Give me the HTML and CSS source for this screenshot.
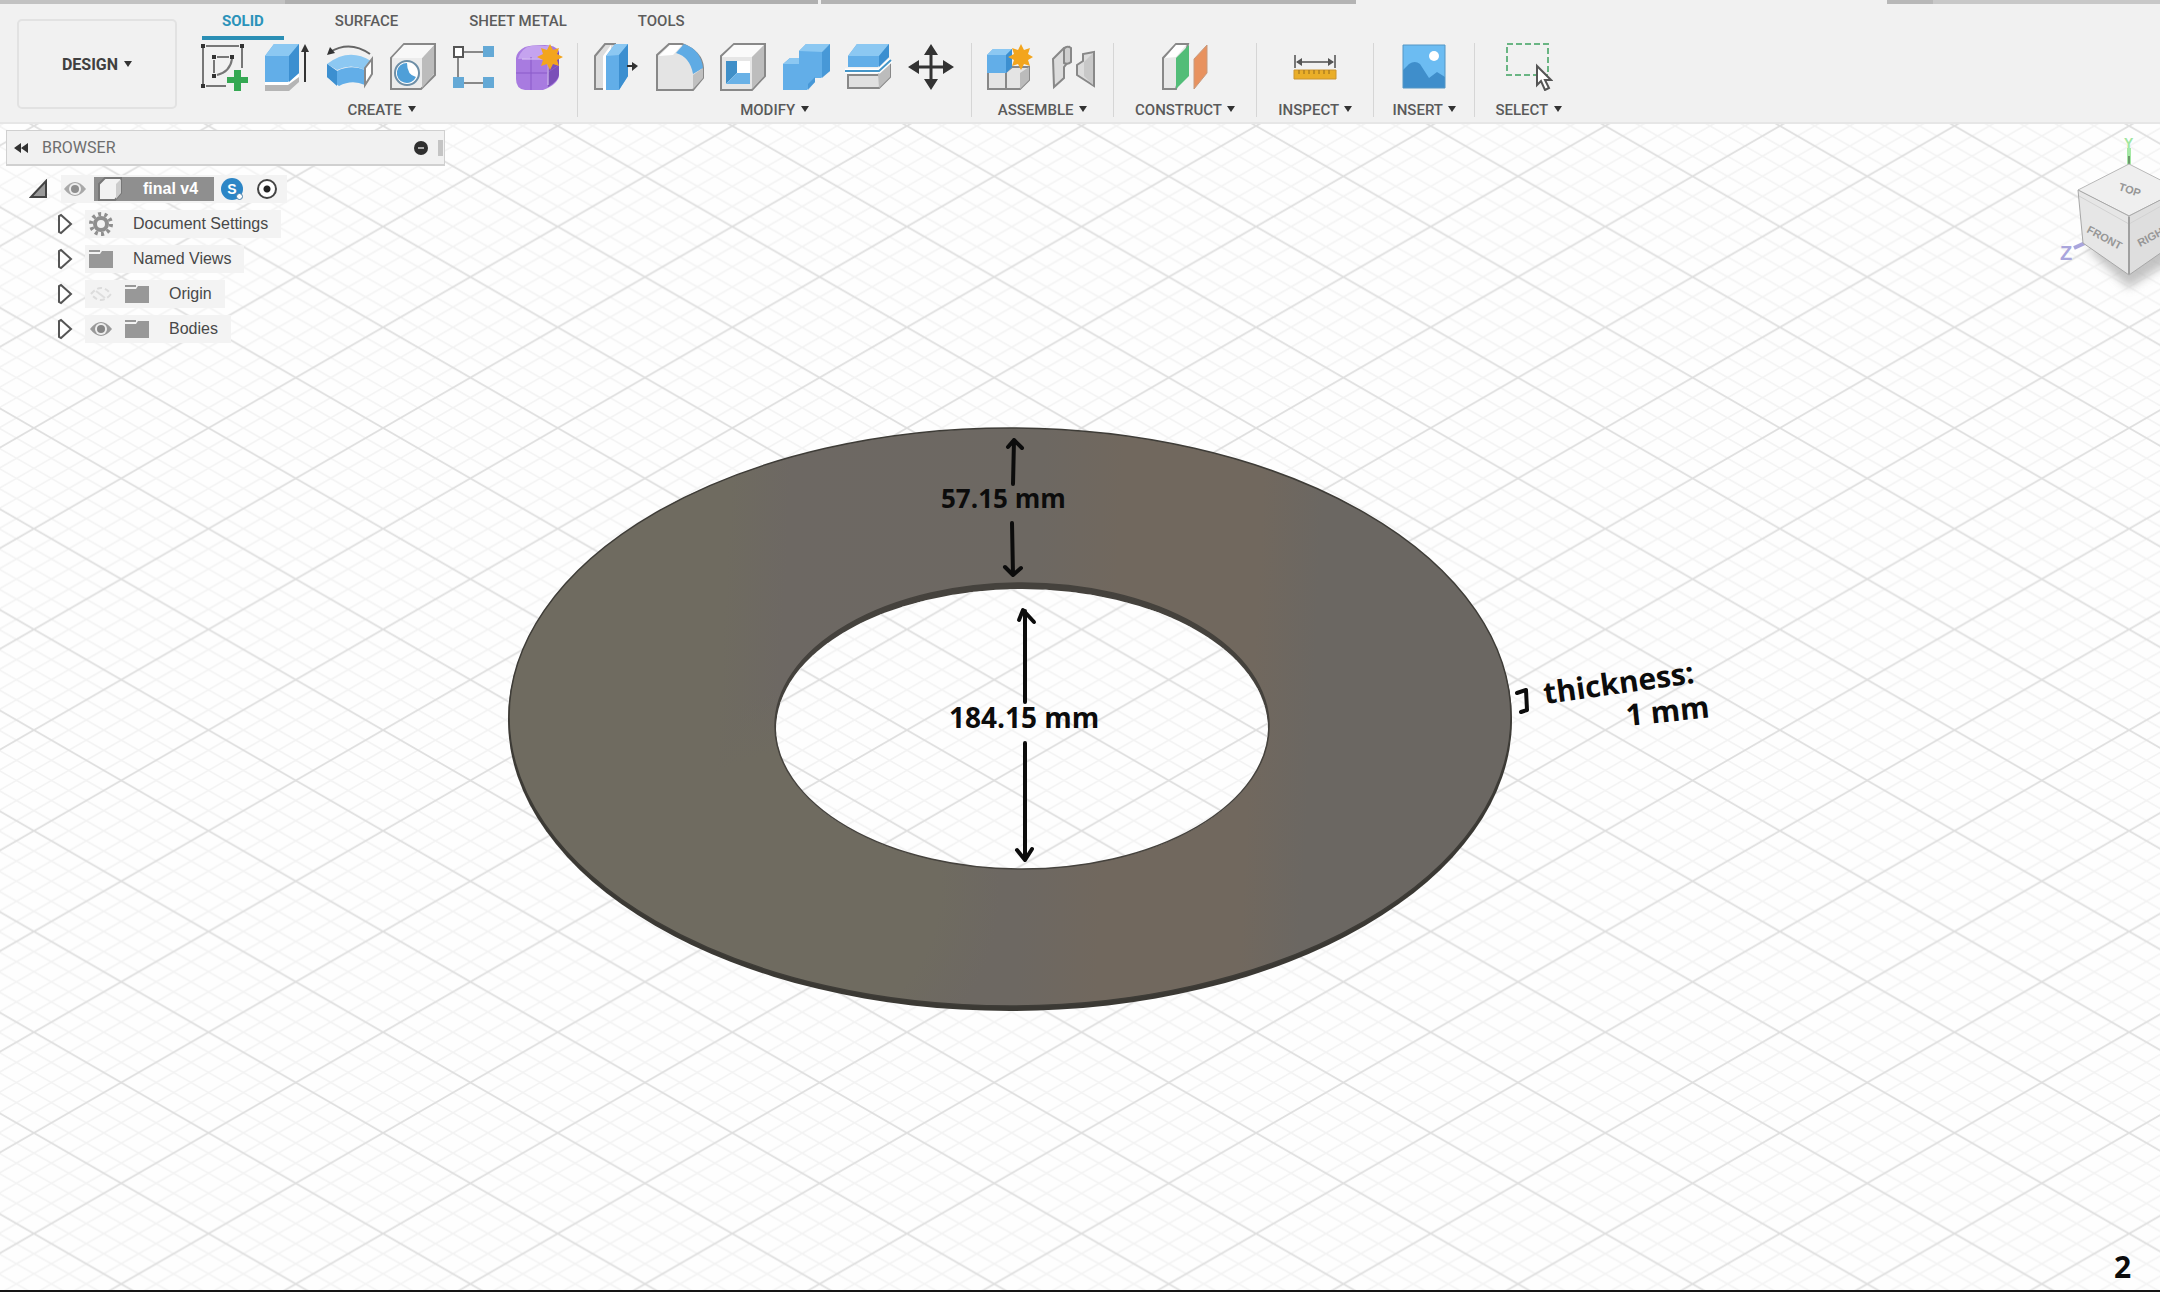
FILE: index.html
```html
<!DOCTYPE html>
<html lang="en">
<head>
<meta charset="utf-8">
<meta name="viewport" content="width=device-width, initial-scale=1">
<title>final v4</title>
<link rel="stylesheet" href="styles.css">
</head>
<body>
<header class="topbar">
  <div class="doc-tabs" aria-hidden="true">
    <span class="doc-tab doc-tab-a"></span><span class="doc-tab doc-tab-b"></span><span class="doc-tab doc-tab-c"></span><span class="doc-gap"></span><span class="doc-tab doc-tab-d"></span><span class="doc-tab doc-tab-e"></span>
  </div>
  <div class="toolbar">
    <button class="workspace" type="button">DESIGN <span class="caret"></span></button>
    <div class="ribbon">
      <nav class="tabs">
        <a class="tab tab-active" href="#solid">SOLID</a>
        <a class="tab" href="#surface">SURFACE</a>
        <a class="tab" href="#sheet">SHEET METAL</a>
        <a class="tab" href="#tools">TOOLS</a>
      </nav>
      <div class="groups">
        <section class="group group-first">
          <div class="icons">
            <button class="tool" type="button" aria-label="Create sketch"><svg viewBox="0 0 48 48"><g fill="none" stroke="#777" stroke-width="2"><path d="M3 5v36M42 5v20M6 3h33M6 43h20"/><path d="M14 17v13M17 14h12M32 16q-2 13-15 16"/></g><g fill="#333"><path d="M1 1h4v4H1zM40 1h4v4h-4zM1 41h4v4H1zM12 12h4v4h-4zM30 12h4v4h-4zM12 31h4v4h-4z"/></g><path d="M34 27h7v7h7v6h-7v8h-7v-8h-7v-6h7z" fill="#35a853"/></svg></button>
            <button class="tool" type="button" aria-label="Extrude"><svg viewBox="0 0 48 48"><path d="M2 41h22l12-8v6l-10 9H2z" fill="#b5b5b5"/><path d="M2 39h22l12-9v4l-11 8H2z" fill="#fff"/><path d="M2 13L11 1h25v29l-11 9H2z" fill="#62aee8"/><path d="M2 13L11 1h25L26 13z" fill="#8cc8f2"/><path d="M26 13L36 1v29l-10 9z" fill="#3c8fd0"/><path d="M42 39V7" stroke="#333" stroke-width="2"/><path d="M42 1l4 8h-8z" fill="#333"/></svg></button>
            <button class="tool" type="button" aria-label="Revolve"><svg viewBox="0 0 48 48"><path d="M4 9q20-12 40 2" fill="none" stroke="#666" stroke-width="2"/><path d="M1 12l3-8 5 6z" fill="#333"/><path d="M1 21q22-17 44-3l-6 9q-14-7-28 0z" fill="#8cc8f2"/><path d="M1 21l10 7q14-7 28-1v15q-13-6-26 1L1 34z" fill="#62aee8"/><path d="M1 21l10 7v15L1 34z" fill="#3c8fd0"/><path d="M46 16v15l-7 11V25z" fill="#fff" stroke="#888" stroke-width="2"/></svg></button>
            <button class="tool" type="button" aria-label="Hole"><svg viewBox="0 0 48 48"><path d="M2 15L15 1h31v31L32 46H2z" fill="#ececec" stroke="#888" stroke-width="2"/><path d="M33 15L45 2v29L33 45z" fill="#bcbcbc"/><path d="M3 15L15 2h30L33 15z" fill="#f8f8f8"/><circle cx="18" cy="30" r="12" fill="#fff" stroke="#6d8ea6" stroke-width="2"/><path d="M18 20a10 10 0 1 0 9 14Q18 32 18 20z" fill="#4f9fd8"/></svg></button>
            <button class="tool" type="button" aria-label="Rectangular pattern"><svg viewBox="0 0 48 48"><path d="M6 9h36M6 9v31h36" fill="none" stroke="#888" stroke-width="2"/><path d="M2 4h9v10H2z" fill="#fff" stroke="#555" stroke-width="2"/><path d="M31 3h11v11H31zM31 34h11v11H31zM1 34h11v11H1z" fill="#64a9d6"/></svg></button>
            <button class="tool" type="button" aria-label="Create form"><svg viewBox="0 0 48 48"><path d="M1 15Q2 8 10 4q5-2 20-2 10 0 14 6v24q0 4-4 8t-12 7H10Q1 46 1 36z" fill="#a87be0"/><path d="M32 17l12-8v23q-1 6-11 12z" fill="#7b50b8"/><path d="M3 16Q6 5 16 3h18L30 15z" fill="#c5a3ef"/><path d="M1 30h31l12-8M16 14v33" fill="none" stroke="#8a5bc9" stroke-width="1"/><path d="M7 16h24q2 2 2 6v20" fill="none" stroke="#e0cdf6" stroke-width="1"/><path d="M35 1l3 6 6-2-2 6 6 3-6 3 2 6-6-2-3 6-3-6-6 2 2-6-6-3 6-3-2-6 6 2z" fill="#f3a51d"/></svg></button>
          </div>
          <button class="menu" type="button">CREATE <span class="caret"></span></button>
        </section>
        <section class="group">
          <div class="icons">
            <button class="tool" type="button" aria-label="Press pull"><svg viewBox="0 0 48 48"><path d="M2 13L12 1h10v45H2z" fill="#ddd" stroke="#888" stroke-width="2"/><path d="M10 13L18 2v45h-8z" fill="#fff"/><path d="M13 13L22 1h13v32L26 47H13z" fill="#62aee8"/><path d="M13 13L22 1h13L26 12z" fill="#8cc8f2"/><path d="M26 12L35 1v32l-9 14z" fill="#3c8fd0"/><path d="M34 23h7" stroke="#333" stroke-width="2"/><path d="M39 19l6 4-6 5z" fill="#333"/></svg></button>
            <button class="tool" type="button" aria-label="Fillet"><svg viewBox="0 0 48 48"><path d="M1 12L13 1h13q20 8 21 24v10L37 47H1z" fill="#e4e4e4" stroke="#888" stroke-width="2"/><path d="M3 13L14 2h12l-9 10z" fill="#fff"/><path d="M20 10l8-9q17 6 19 24l-10 6Q34 14 20 10z" fill="#5fabe4"/><path d="M37 32l10-7v10L37 46z" fill="#c0c0c0"/></svg></button>
            <button class="tool" type="button" aria-label="Shell"><svg viewBox="0 0 48 48"><path d="M2 13L15 1h31v32L33 47H2z" fill="#e6e6e6" stroke="#888" stroke-width="2"/><path d="M3 14L15 2h30L33 14z" fill="#fafafa"/><path d="M33 14L45 2v31L33 46z" fill="#bdbdbd"/><path d="M7 18h24v23H7z" fill="#fff"/><path d="M7 18h11v12L7 41z" fill="#3f8fc8"/><path d="M7 41l11-11h13v11z" fill="#69b1e6"/></svg></button>
            <button class="tool" type="button" aria-label="Combine"><svg viewBox="0 0 48 48"><path d="M1 21l7-6h9V8l7-7h24v27l-9 7h-6v4l-8 8H1z" fill="#62aee8"/><path d="M17 8l7-7h24l-7 8zM1 21l7-6h9v6z" fill="#8cc8f2"/><path d="M40 9l8-8v27l-8 7zM26 41l7-7v5l-7 8z" fill="#3c8fd0" opacity=".7"/></svg></button>
            <button class="tool" type="button" aria-label="Split body"><svg viewBox="0 0 48 48"><path d="M3 32h30l12-12v14L34 45H3z" fill="#e0e0e0" stroke="#888" stroke-width="2"/><path d="M33 31l12-11v14L34 45z" fill="#bcbcbc"/><path d="M3 13L12 1h32v13L33 24H3z" fill="#62aee8"/><path d="M3 13L12 1h32L34 13z" fill="#8cc8f2"/><path d="M34 13L44 1v13L34 24z" fill="#3c8fd0"/><path d="M0 28h34l12-11" fill="none" stroke="#fff" stroke-width="5"/><path d="M0 28h34l12-11" fill="none" stroke="#4596c8" stroke-width="2"/></svg></button>
            <button class="tool" type="button" aria-label="Move"><svg viewBox="0 0 48 48"><path d="M23 8v32M7 24h32" stroke="#333" stroke-width="3"/><path d="M23 1l7 11H16zM23 47l-7-11h14zM0 24l11-7v14zM46 24l-11 7V17z" fill="#333"/></svg></button>
          </div>
          <button class="menu" type="button">MODIFY <span class="caret"></span></button>
        </section>
        <section class="group">
          <div class="icons">
            <button class="tool" type="button" aria-label="New component"><svg viewBox="0 0 48 48"><path d="M1 29h18V46H1zM19 29l6-5h17v13l-9 9H19z" fill="#e4e4e4" stroke="#888" stroke-width="2"/><path d="M33 30l9-6v13l-9 9z" fill="#bbb"/><path d="M0 12l6-6h19v18l-6 6H0z" fill="#62aee8"/><path d="M0 12l6-6h19l-6 6z" fill="#8cc8f2"/><path d="M19 12l6-6v18l-6 6z" fill="#3c8fd0"/><path d="M34 1l3 6 6-2-2 6 5 3-5 3 2 6-6-2-3 6-3-6-6 2 2-6-6-3 6-3-2-6 6 2z" fill="#f3a51d"/></svg></button>
            <button class="tool" type="button" aria-label="Joint"><svg viewBox="0 0 48 48"><g fill="#dcdcdc" stroke="#888" stroke-width="2"><path d="M3 16L14 5l5-1v14l-5 6v11L4 44z"/><path d="M14 6q3-4 7-1v14q-3 3-7 1z" fill="#cfcfcf"/><path d="M44 9v34L27 32V22l6-4v-7z"/></g><path d="M34 19l9-9v32l-9-9z" fill="#c8c8c8"/></svg></button>
          </div>
          <button class="menu" type="button">ASSEMBLE <span class="caret"></span></button>
        </section>
        <section class="group group-single">
          <div class="icons">
            <button class="tool" type="button" aria-label="Offset plane"><svg viewBox="0 0 48 48"><path d="M2 15L15 1h12L15 46H2z" fill="#e8e8e8" stroke="#888" stroke-width="2"/><path d="M4 15L15 2h10L15 14z" fill="#fff"/><path d="M15 15L28 2v31L15 46z" fill="#52bd78"/><path d="M33 16L46 2v28L33 46z" fill="#e8925f" stroke="#c79a7e" stroke-width="1"/></svg></button>
          </div>
          <button class="menu" type="button">CONSTRUCT <span class="caret"></span></button>
        </section>
        <section class="group group-single">
          <div class="icons">
            <button class="tool" type="button" aria-label="Measure"><svg viewBox="0 0 48 48"><path d="M4 12v13M44 12v13M6 19h36" stroke="#777" stroke-width="2"/><path d="M5 19l6-4v8zM43 19l-6-4v8z" fill="#555"/><path d="M3 27h42v9H3z" fill="#eaae28" stroke="#cb9430" stroke-width="1"/><path d="M8 27v4M13 27v4M18 27v4M23 27v4M28 27v4M33 27v4M38 27v4" stroke="#936b1c" stroke-width="1"/></svg></button>
          </div>
          <button class="menu" type="button">INSPECT <span class="caret"></span></button>
        </section>
        <section class="group group-insert">
          <div class="icons">
            <button class="tool" type="button" aria-label="Insert image"><svg viewBox="0 0 48 48"><path d="M3 2h42v43H3z" fill="#6cbcf2"/><path d="M3 27l6-6q6-4 11 0l9 14 8-6 8 5v11H3z" fill="#3f8ecb"/><circle cx="34" cy="13" r="5" fill="#fff"/><path d="M3 2h42v43H3z" fill="none" stroke="#5596c4" stroke-width="1"/></svg></button>
          </div>
          <button class="menu" type="button">INSERT <span class="caret"></span></button>
        </section>
        <section class="group group-last">
          <div class="icons">
            <button class="tool" type="button" aria-label="Select"><svg viewBox="0 0 48 48"><path d="M2 1h41v31H2z" fill="none" stroke="#69b583" stroke-width="2" stroke-dasharray="6 3"/><path d="M32 23v19l4-4 4 9 4-2-4-8h6z" fill="#fff" stroke="#555" stroke-width="2"/></svg></button>
          </div>
          <button class="menu" type="button">SELECT <span class="caret"></span></button>
        </section>
      </div>
    </div>
  </div>
</header>

<main class="viewport">
  <svg class="scene" viewBox="0 124 2160 1166" preserveAspectRatio="xMidYMid slice">
    <defs>
      <pattern id="grid" patternUnits="userSpaceOnUse" x="33.9" y="125.9" width="174.6" height="100.7" viewBox="0 0 175 100" preserveAspectRatio="none">
        <g fill="none" stroke="#f3f3f3" stroke-width="1.6">
          <path d="M35 0L175 80M70 0L175 60M105 0L175 40M140 0L175 20M0 20L140 100M0 40L105 100M0 60L70 100M0 80L35 100"/>
          <path d="M140 0L0 80M105 0L0 60M70 0L0 40M35 0L0 20M175 20L35 100M175 40L70 100M175 60L105 100M175 80L140 100"/>
        </g>
        <path d="M-7 -4L182 104M-7 104L182 -4M-7 4L7 -4M168 104L182 96M-7 96L7 104M168 -4L182 4" stroke="#dfdfdf" stroke-width="1.8"/>
      </pattern>
      <linearGradient id="metal" gradientUnits="userSpaceOnUse" x1="509" y1="690" x2="1512" y2="740">
        <stop offset="0" stop-color="#6f6b60"/><stop offset=".21" stop-color="#6f6b60"/>
        <stop offset=".27" stop-color="#6d6863"/><stop offset=".52" stop-color="#6d6862"/>
        <stop offset=".6" stop-color="#71685e"/><stop offset=".74" stop-color="#71685e"/>
        <stop offset=".8" stop-color="#6b6762"/><stop offset="1" stop-color="#6b6762"/>
      </linearGradient>
      <radialGradient id="olive" gradientUnits="userSpaceOnUse" cx="800" cy="890" r="200">
        <stop offset="0" stop-color="#6f6b60"/><stop offset=".7" stop-color="#6f6b60"/><stop offset="1" stop-color="#6f6b60" stop-opacity="0"/>
      </radialGradient>
    </defs>
    <path d="M0 124h2160v1166H0z" fill="#fefefe"/>
    <path d="M0 124h2160v1166H0z" fill="url(#grid)"/>
    <ellipse cx="1010" cy="720" rx="502" ry="291" fill="#3b3934"/>
    <ellipse cx="1010" cy="717" rx="501" ry="289" fill="url(#metal)"/>
    <ellipse cx="1010" cy="717" rx="501" ry="289" fill="url(#olive)" stroke="#3e3c37" stroke-width="1.5"/>
    <ellipse cx="1022" cy="726" rx="247" ry="143" fill="#45423d"/>
    <ellipse cx="1022" cy="729" rx="246" ry="140" fill="#fefefe"/>
    <ellipse cx="1022" cy="729" rx="246" ry="140" fill="url(#grid)"/>
    <ellipse cx="1022" cy="726" rx="247" ry="143" fill="none" stroke="#45423d" stroke-width="1.5"/>
    <g class="ink">
      <path d="M1013 484L1014 440M1008 447L1014 440L1022 448"/>
      <path d="M1012 523L1013 575M1005 567L1013 575L1021 568"/>
      <path d="M1025 702V611M1019 620L1023 610L1034 622"/>
      <path d="M1025 743V860M1017 850L1025 860L1032 849"/>
      <path d="M1517 693L1526 690L1527 710L1521 712"/>
    </g>
    <g class="note">
      <text x="941" y="508">57.15 mm</text>
      <text class="note-wide" x="949" y="728">184.15 mm</text>
      <text class="note-large" x="1545" y="704" transform="rotate(-8 1545 704)">thickness:</text>
      <text class="note-large" x="1627" y="726" transform="rotate(-6 1627 726)">1 mm</text>
      <text class="note-large" x="2114" y="1278">2</text>
    </g>
  </svg>

  <svg class="viewcube" viewBox="0 0 140 180" role="img" aria-label="View cube">
    <defs><filter id="soft" x="-30%" y="-30%" width="160%" height="160%"><feGaussianBlur stdDeviation="5"/></filter></defs>
    <path d="M66 124l43 40 50-32v-20z" fill="#aaa" opacity=".7" filter="url(#soft)"/>
    <path d="M109 24v18" stroke="#a5e8a5" stroke-width="4"/>
    <path d="M109 32v10" stroke="#6b9a6b" stroke-width="2"/>
    <path d="M54 124l11-5" stroke="#a9a5dc" stroke-width="4"/>
    <path d="M58 66l51-26 51 26-51 26z" fill="#efefef" stroke="#b8b8b8" stroke-width="1"/>
    <path d="M58 66l51 26v59l-46-32z" fill="#e6e6e6" stroke="#a8a8a8" stroke-width="1"/>
    <path d="M160 66l-51 26v59l46-32z" fill="#dedede" stroke="#a8a8a8" stroke-width="1"/>
    <path d="M59 72l50 28 50-28" fill="none" stroke="#d2d2d2" stroke-width="1"/>
    <path d="M109 93v57" stroke="#a0a0a0" stroke-width="2"/>
    <text class="axis axis-y" x="104" y="24">Y</text>
    <text class="axis axis-z" x="40" y="136">Z</text>
    <text class="face" x="98" y="66" transform="rotate(18 98 66)">TOP</text>
    <text class="face" x="66" y="108" transform="rotate(28 66 108)">FRONT</text>
    <text class="face" x="120" y="123" transform="rotate(-28 120 123)">RIGHT</text>
  </svg>

  <aside class="browser">
    <header class="browser-head">
      <button class="plain" type="button" aria-label="Collapse"><svg class="ico-sm" viewBox="0 0 16 12"><path d="M8 1v10L1 6zM15 1v10L8 6z" fill="#333"/></svg></button>
      <h2>BROWSER</h2>
      <button class="plain" type="button" aria-label="Hide"><svg class="ico-dot" viewBox="0 0 14 14"><circle cx="7" cy="7" r="7" fill="#2f2f2f"/><path d="M4 7h6" stroke="#aaa" stroke-width="2"/></svg></button>
      <span class="grip"></span>
    </header>
    <ul class="tree">
      <li class="row row-root">
        <button class="plain" type="button" aria-label="Collapse final v4"><svg class="ico-20" viewBox="0 0 20 20"><path d="M2 18L17 2v16z" fill="#999" stroke="#444" stroke-width="2"/></svg></button>
        <div class="chip chip-root">
          <svg class="ico-24" viewBox="0 0 24 24"><path d="M1 12Q12-2 23 12 12 26 1 12z" fill="#a9a9a9"/><circle cx="12" cy="12" r="6" fill="#eee"/><circle cx="12" cy="12" r="4" fill="#8e8e8e"/></svg>
          <span class="selected"><svg class="ico-24" viewBox="0 0 24 24"><path d="M1 7l6-6h16v15l-6 7H1z" fill="#f2f2f2" stroke="#777" stroke-width="2"/><path d="M18 7l5-5v14l-5 6z" fill="#ccc"/></svg><b>final v4</b></span>
          <span class="badge">S<i></i></span>
          <input class="activate" type="radio" aria-label="Activate final v4" checked>
        </div>
      </li>
      <li class="row">
        <button class="plain" type="button" aria-label="Expand"><svg class="ico-exp" viewBox="0 0 16 22"><path d="M2 3v16l2 1 10-9L4 2z" fill="#fff" stroke="#555" stroke-width="2"/></svg></button>
        <div class="chip"><svg class="ico-24" viewBox="0 0 24 24"><circle cx="12" cy="12" r="6" fill="none" stroke="#8f8f8f" stroke-width="4"/><circle cx="12" cy="12" r="10" fill="none" stroke="#8f8f8f" stroke-width="4" stroke-dasharray="3 3.28"/></svg><span>Document Settings</span></div>
      </li>
      <li class="row">
        <button class="plain" type="button" aria-label="Expand"><svg class="ico-exp" viewBox="0 0 16 22"><path d="M2 3v16l2 1 10-9L4 2z" fill="#fff" stroke="#555" stroke-width="2"/></svg></button>
        <div class="chip"><svg class="ico-24" viewBox="0 0 24 24"><path d="M0 3h11v2H0zM0 7h11l2-3h11v17H0z" fill="#989898"/></svg><span>Named Views</span></div>
      </li>
      <li class="row">
        <button class="plain" type="button" aria-label="Expand"><svg class="ico-exp" viewBox="0 0 16 22"><path d="M2 3v16l2 1 10-9L4 2z" fill="#fff" stroke="#555" stroke-width="2"/></svg></button>
        <div class="chip"><svg class="ico-24" viewBox="0 0 24 24"><path d="M2 12Q12 0 22 12 12 24 2 12z" fill="none" stroke="#dcdcdc" stroke-width="2" stroke-dasharray="5 3"/><path d="M7 9l9 7" stroke="#dedede" stroke-width="2"/></svg><svg class="ico-24" viewBox="0 0 24 24"><path d="M0 3h11v2H0zM0 7h11l2-3h11v17H0z" fill="#989898"/></svg><span>Origin</span></div>
      </li>
      <li class="row">
        <button class="plain" type="button" aria-label="Expand"><svg class="ico-exp" viewBox="0 0 16 22"><path d="M2 3v16l2 1 10-9L4 2z" fill="#fff" stroke="#555" stroke-width="2"/></svg></button>
        <div class="chip"><svg class="ico-24" viewBox="0 0 24 24"><path d="M1 12Q12-2 23 12 12 26 1 12z" fill="#9a9a9a"/><circle cx="12" cy="12" r="6" fill="#eee"/><circle cx="12" cy="12" r="4" fill="#858585"/></svg><svg class="ico-24" viewBox="0 0 24 24"><path d="M0 3h11v2H0zM0 7h11l2-3h11v17H0z" fill="#989898"/></svg><span>Bodies</span></div>
      </li>
    </ul>
  </aside>
</main>
</body>
</html>
```
FILE: styles.css
```css
* { box-sizing: border-box; }

body {
  margin: 0;
  min-height: 100vh;
  display: flex;
  flex-direction: column;
  font-family: "Liberation Sans", Arial, sans-serif;
  font-size: 16px;
  color: #484848;
  background: #fefefe;
}

button {
  margin: 0;
  padding: 0;
  border: 0;
  background: none;
  color: inherit;
  font: inherit;
}

svg { display: block; }

/* Top bar */
.topbar {
  background: #f1f1f1;
  border-bottom: 2px solid #e6e6e6;
  font-family: Roboto, sans-serif;
  font-size: 15px;
}

.doc-tabs { display: flex; height: 4px; }
.doc-tab-a { flex: 285; background: #c2c2c2; }
.doc-tab-b { flex: 533; background: #b0b0b0; margin-right: 3px; }
.doc-tab-c { flex: 535; background: #b4b4b4; }
.doc-gap { flex: 531; }
.doc-tab-d { flex: 46; background: #b8b8b8; }
.doc-tab-e { flex: 227; background: #c8c8c8; }

.toolbar {
  display: flex;
  gap: 23px;
  padding-left: 17px;
}

.workspace {
  flex: none;
  width: 160px;
  height: 90px;
  margin-top: 15px;
  border: 2px solid #e2e2e2;
  border-radius: 5px;
  font-size: 16px;
  font-weight: 700;
  color: #404040;
}

.caret {
  display: inline-block;
  margin-left: 2px;
  border: 4px solid transparent;
  border-top: 6px solid #333;
  border-bottom: 0;
  vertical-align: 3px;
}

.ribbon { flex: 1; }

.tabs {
  display: flex;
  gap: 31px;
  height: 36px;
  padding-left: 2px;
}

.tab {
  height: 36px;
  padding: 0 20px;
  border-bottom: 4px solid transparent;
  line-height: 34px;
  font-weight: 500;
  color: #5c5c5c;
  text-decoration: none;
}

.tab-active {
  color: #2b93ba;
  border-color: #2b8fb5;
  font-weight: 700;
}

.groups {
  display: flex;
  margin-top: 3px;
  height: 79px;
}

.group {
  display: flex;
  flex-direction: column;
  align-items: center;
  gap: 9px;
  height: 74px;
  padding: 0 15px;
  border-right: 1px solid #d6d6d6;
}
.group-first { padding: 0 14px 0 0; }
.group-single { padding: 0 21px; }
.group-insert { padding: 0 18px; }
.group-last { padding: 0 20px; border: 0; }

.icons { display: flex; gap: 15px; }
.tool { width: 48px; height: 48px; }
.tool svg { width: 48px; height: 48px; }

.menu {
  line-height: 20px;
  font-weight: 500;
  color: #5a5a5a;
  white-space: nowrap;
}

/* Canvas */
.viewport {
  position: relative;
  flex: 1;
  overflow: hidden;
  border-bottom: 2px solid #151515;
}

.scene {
  position: absolute;
  inset: 0;
  width: 100%;
  height: 100%;
}

.ink path {
  fill: none;
  stroke: #0c0c0c;
  stroke-width: 4;
  stroke-linecap: round;
  stroke-linejoin: round;
}

.note {
  fill: #0c0c0c;
  font-family: "Open Sans", sans-serif;
  font-size: 26px;
  font-weight: 700;
}
.note-wide { font-size: 28px; }
.note-large { font-size: 30px; }

.viewcube {
  position: absolute;
  top: 0;
  right: 0;
  width: 140px;
  height: 180px;
}
.axis { font-size: 14px; font-weight: 700; }
.axis-y { fill: #a0e6a0; }
.axis-z { fill: #a9a5dc; font-size: 20px; }
.face { font-size: 11px; font-weight: 700; fill: #979797; }

/* Browser panel */
.browser {
  position: absolute;
  top: 6px;
  left: 6px;
  width: 439px;
}

.browser-head {
  display: flex;
  align-items: center;
  height: 36px;
  padding-left: 6px;
  border: 1px solid #d0d0d0;
  border-bottom-width: 2px;
  background: #f1f1f1;
  font-family: Roboto, sans-serif;
}
.browser-head h2 {
  flex: 1;
  margin: 0 0 0 13px;
  font-size: 16px;
  font-weight: 400;
  color: #6e6e6e;
}
.grip {
  width: 5px;
  height: 16px;
  margin: 0 1px 0 10px;
  background: #c4c4c4;
}

.ico-sm { width: 16px; height: 12px; }
.ico-dot { width: 14px; height: 14px; }
.ico-20 { width: 20px; height: 20px; }
.ico-24 { width: 24px; height: 24px; }
.ico-exp { width: 16px; height: 22px; }

.tree {
  margin: 5px 0 0;
  padding: 0;
  list-style: none;
}

.row {
  display: flex;
  align-items: center;
  gap: 12px;
  height: 35px;
  padding-left: 51px;
}
.row-root { gap: 12px; padding-left: 23px; }

.chip {
  display: flex;
  align-items: center;
  height: 28px;
  padding: 0 13px 0 4px;
  gap: 12px;
  background: #f3f3f3;
}
.chip > span { margin-left: 8px; }

.chip-root { padding: 0 10px 0 2px; gap: 7px; }
.chip-root > span { margin: 0; }

.selected {
  display: flex;
  align-items: center;
  gap: 21px;
  width: 120px;
  height: 24px;
  padding-left: 4px;
  background: #8f8f8f;
  color: #fff;
}

.badge {
  position: relative;
  width: 22px;
  height: 22px;
  border-radius: 50%;
  background: #2d86c6;
  color: #fff;
  font-size: 14px;
  font-weight: 700;
  line-height: 22px;
  text-align: center;
}
.badge i {
  position: absolute;
  right: 0;
  bottom: 0;
  width: 7px;
  height: 7px;
  border: 1px solid #4a7fa8;
  border-radius: 50%;
  background: #fff;
}

.activate {
  appearance: none;
  width: 20px;
  height: 20px;
  margin: 0 0 0 7px;
  border: 2px solid #444;
  border-radius: 50%;
  background: radial-gradient(circle, #222 3px, #fff 4px);
}
```
